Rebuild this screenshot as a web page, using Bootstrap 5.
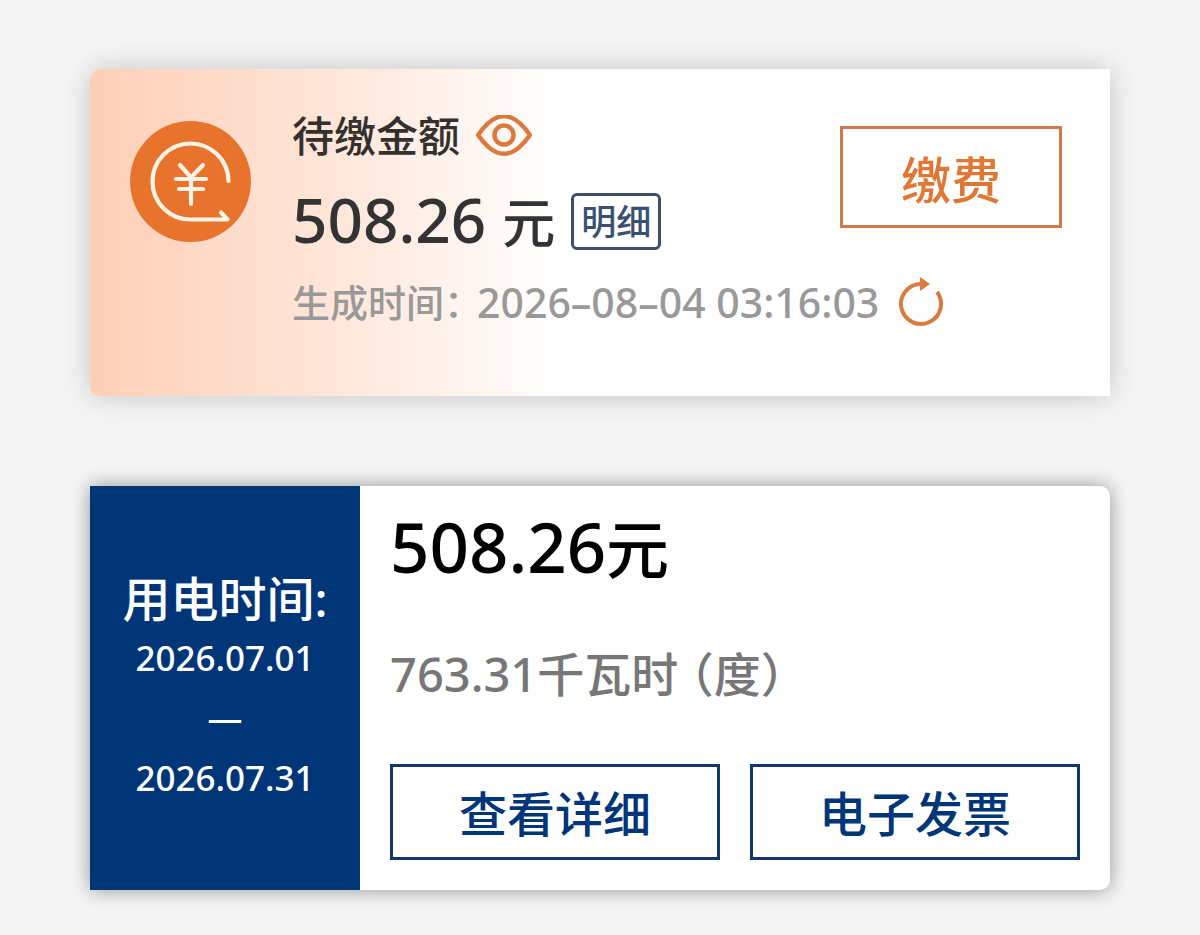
<!DOCTYPE html>
<html lang="zh-CN">
<head>
<meta charset="utf-8">
<meta name="viewport" content="width=device-width, initial-scale=1">
<title>电费账单</title>
<link href="https://cdn.jsdelivr.net/npm/bootstrap@5.3.0/dist/css/bootstrap.min.css" rel="stylesheet">
<style>
  body { background: #f5f5f5; font-family: "Noto Sans", "Noto Sans CJK SC", sans-serif; font-weight: 500; }
  .page { padding: 69px 90px 46px; gap: 90px; }
  .due-card { background: linear-gradient(90deg, #fecfb6 0%, #ffe4d7 22%, #fff 46%); border-radius: 10px 0 0 10px;
    box-shadow: 0 0 30px rgba(0,0,0,.2); padding: 37px 48px 68px 40px; gap: 41px; }
  .coin { width: 121px; height: 121px; margin-top: 15px; }
  .lines { gap: 25px; flex: 1 1 0; min-width: 0; }
  .line { height: 60px; line-height: 60px; white-space: nowrap; }
  .label-text { font-size: 42px; color: #33302e; }
  .sum { font-size: 62px; color: #333; }
  .unit { font-size: 53px; }
  .stamp { font-size: 41px; color: #999; height: 52px; line-height: 52px; }
  .stamp-label { font-size: 38px; margin-right: 14px; }
  .half { font-feature-settings: "halt"; }
  .tag-btn { border: 3px solid #3d4f6c; border-radius: 6px; color: #3a5072; background: #fff; font-size: 35px; font-weight: 500;
    line-height: 51px; padding: 0 7px; }
  .icon-btn { border: 0; padding: 0; background: none; line-height: 0; }
  .box-btn { border: 3px solid #12376b; border-radius: 0; background: #fff; color: #003678; font-size: 48px; font-weight: 500; line-height: 60px; padding: 17px 0 13px; white-space: nowrap; }
  .pay-btn { border-color: #cf7a49; color: #e07734; font-size: 50px; padding: 21px 58px 15px; margin-top: 20px; }
  .bill-card { background: #fff; border-radius: 0 10px 10px 0; box-shadow: 0 0 20px rgba(0,0,0,.4); }
  .period { width: 270px; background: #003678; color: #fff; font-size: 35px; line-height: 60px; padding-top: 2px; }
  .period-title { font-size: 48px; line-height: 58px; }
  .bill-body { padding: 18px 30px 30px; min-width: 0; }
  .total { font-size: 69px; line-height: 84px; color: #000; }
  .total .unit { font-size: 63px; }
  .usage { font-size: 47px; line-height: 60px; color: #777; margin: 53px 0 60px; }
  .usage-note { margin-left: 12px; }
  .bill-actions { gap: 30px; }
</style>
</head>
<body>
<main class="page d-flex flex-column">
  <section class="due-card d-flex align-items-start">
    <svg class="coin flex-shrink-0" viewBox="0 0 121 121" aria-hidden="true">
      <circle cx="60.500" cy="60.500" r="60.500" fill="#e8732c"/>
      <g fill="none" stroke="#fff3e6" stroke-width="4.200" stroke-linecap="round" stroke-linejoin="round">
        <path d="M98.500 60A38 38 0 1 0 60.500 98.500H97.500L91 91.500"/>
        <path d="M50 44L61 56.500L73 44M46 58H76M49 68H73M61 57V83"/>
      </g>
    </svg>
    <div class="lines d-flex flex-column">
      <div class="line d-flex align-items-center">
        <span class="label-text">待缴金额</span>
        <button type="button" class="icon-btn ms-3" aria-label="显示金额">
          <svg width="56" height="42" viewBox="0 0 56 42" fill="none" stroke="#dc7a3d" stroke-width="4.500" stroke-linejoin="round">
            <path d="M2 20Q12 6 21 2.500Q28 0 35 2.500Q44 6 54 20Q44 34 35 37.500Q28 40 21 37.500Q12 34 2 20Z"/><circle cx="28" cy="20" r="9.500"/>
          </svg>
        </button>
      </div>
      <div class="line d-flex align-items-center">
        <span class="sum">508.26 <span class="unit">元</span></span>
        <button type="button" class="tag-btn ms-3">明细</button>
      </div>
      <div class="line stamp d-flex align-items-center">
        <span class="stamp-label">生成时间<span class="half">：</span></span>
        <span>2026–08–04 03:16:03</span>
        <button type="button" class="icon-btn ms-3" aria-label="刷新">
          <svg width="48" height="50" viewBox="0 0 48 50">
            <path d="M42 15A20 20 0 1 1 25 7" fill="none" stroke="#dc7a3d" stroke-width="4"/>
            <path d="M25 0L35 7L25 14Z" fill="#dc7a3d"/>
          </svg>
        </button>
      </div>
    </div>
    <button type="button" class="box-btn pay-btn flex-shrink-0">缴费</button>
  </section>

  <section class="bill-card d-flex">
    <div class="period d-flex flex-column justify-content-center text-center flex-shrink-0">
      <div class="period-title">用电时间:</div>
      <div>2026.07.01</div>
      <div>—</div>
      <div>2026.07.31</div>
    </div>
    <div class="bill-body flex-grow-1">
      <div class="total">508.26<span class="unit">元</span></div>
      <div class="usage">763.31千瓦时<span class="usage-note half">（度）</span></div>
      <div class="bill-actions d-flex">
        <button type="button" class="box-btn flex-fill">查看详细</button>
        <button type="button" class="box-btn flex-fill">电子发票</button>
      </div>
    </div>
  </section>
</main>
<script src="https://cdn.jsdelivr.net/npm/bootstrap@5.3.0/dist/js/bootstrap.bundle.min.js"></script>
</body>
</html>
